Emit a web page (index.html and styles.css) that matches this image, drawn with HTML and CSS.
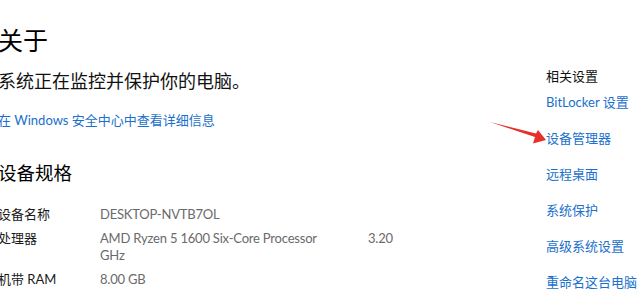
FILE: index.html
```html
<!DOCTYPE html>
<html lang="zh-CN">
<head>
<meta charset="utf-8">
<title>关于</title>
<link rel="stylesheet" href="styles.css">
</head>
<body>
<div class="page">
  <main class="main">
    <h1 class="title">关于</h1>
    <p class="status">系统正在监控并保护你的电脑。</p>
    <a class="link detail-link" href="#">在 Windows 安全中心中查看详细信息</a>
    <h2 class="section">设备规格</h2>
    <div class="specs">
      <div class="spec-label">设备名称</div>
      <div class="spec-value">DESKTOP-NVTB7OL</div>
      <div class="spec-label">处理器</div>
      <div class="spec-value"><div class="cpu-line"><span class="cpu-name">AMD Ryzen 5 1600 Six-Core Processor</span><span>3.20</span></div>GHz</div>
      <div class="spec-label">机带 RAM</div>
      <div class="spec-value">8.00 GB</div>
    </div>
  </main>
  <aside class="related">
    <div class="related-title">相关设置</div>
    <a class="link rel-link" href="#">BitLocker 设置</a>
    <a class="link rel-link" href="#">设备管理器</a>
    <a class="link rel-link" href="#">远程桌面</a>
    <a class="link rel-link" href="#">系统保护</a>
    <a class="link rel-link" href="#">高级系统设置</a>
    <a class="link rel-link" href="#">重命名这台电脑</a>
  </aside>
  <svg class="arrow" width="60" height="26" viewBox="488 120 60 26" aria-hidden="true">
    <polygon fill="#e8302a" points="490,122 536,133.5 538,130 546,140 533,143.5 535,137"/>
  </svg>
</div>
</body>
</html>
```

FILE: styles.css
```css
html, body {
  margin: 0;
  padding: 0;
  background: #ffffff;
}
body {
  font-family: "Lato", "Noto Sans CJK SC", sans-serif;
  color: #1a1a1a;
  width: 640px;
  height: 294px;
  overflow: hidden;
}
.page {
  position: relative;
  display: flex;
  width: 640px;
  height: 294px;
  overflow: hidden;
}
.main {
  flex: 1;
  margin-left: -2px;
  display: flex;
  flex-direction: column;
  align-items: flex-start;
}
.title {
  margin: 23px 0 0 0;
  font-size: 25px;
  line-height: 34px;
  font-weight: 400;
  color: #000;
}
.status {
  margin: 11px 0 0 0;
  font-size: 18px;
  line-height: 26px;
  color: #111;
}
.link {
  color: #1a70cc;
  text-decoration: none;
  font-size: 13px;
  line-height: 20px;
  white-space: nowrap;
}
.detail-link {
  margin-top: 16px;
}
.section {
  margin: 29px 0 0 0;
  font-size: 18.5px;
  line-height: 28px;
  font-weight: 400;
  color: #000;
}
.specs {
  margin-top: 19px;
  display: grid;
  grid-template-columns: 102px auto;
  row-gap: 7px;
  font-size: 13px;
  line-height: 17px;
}
.spec-label {
  color: #1a1a1a;
}
.spec-value {
  color: #6a6a6a;
  letter-spacing: -0.2px;
}
.cpu-line {
  display: flex;
}
.cpu-name {
  width: 268px;
}
.related {
  width: 94px;
  display: flex;
  flex-direction: column;
  align-items: flex-start;
  padding-top: 66px;
  font-size: 13px;
  line-height: 20px;
}
.related-title {
  color: #111;
  margin-bottom: 6px;
  white-space: nowrap;
}
.rel-link + .rel-link {
  margin-top: 16px;
}
.arrow {
  position: absolute;
  left: 488px;
  top: 120px;
}
```
